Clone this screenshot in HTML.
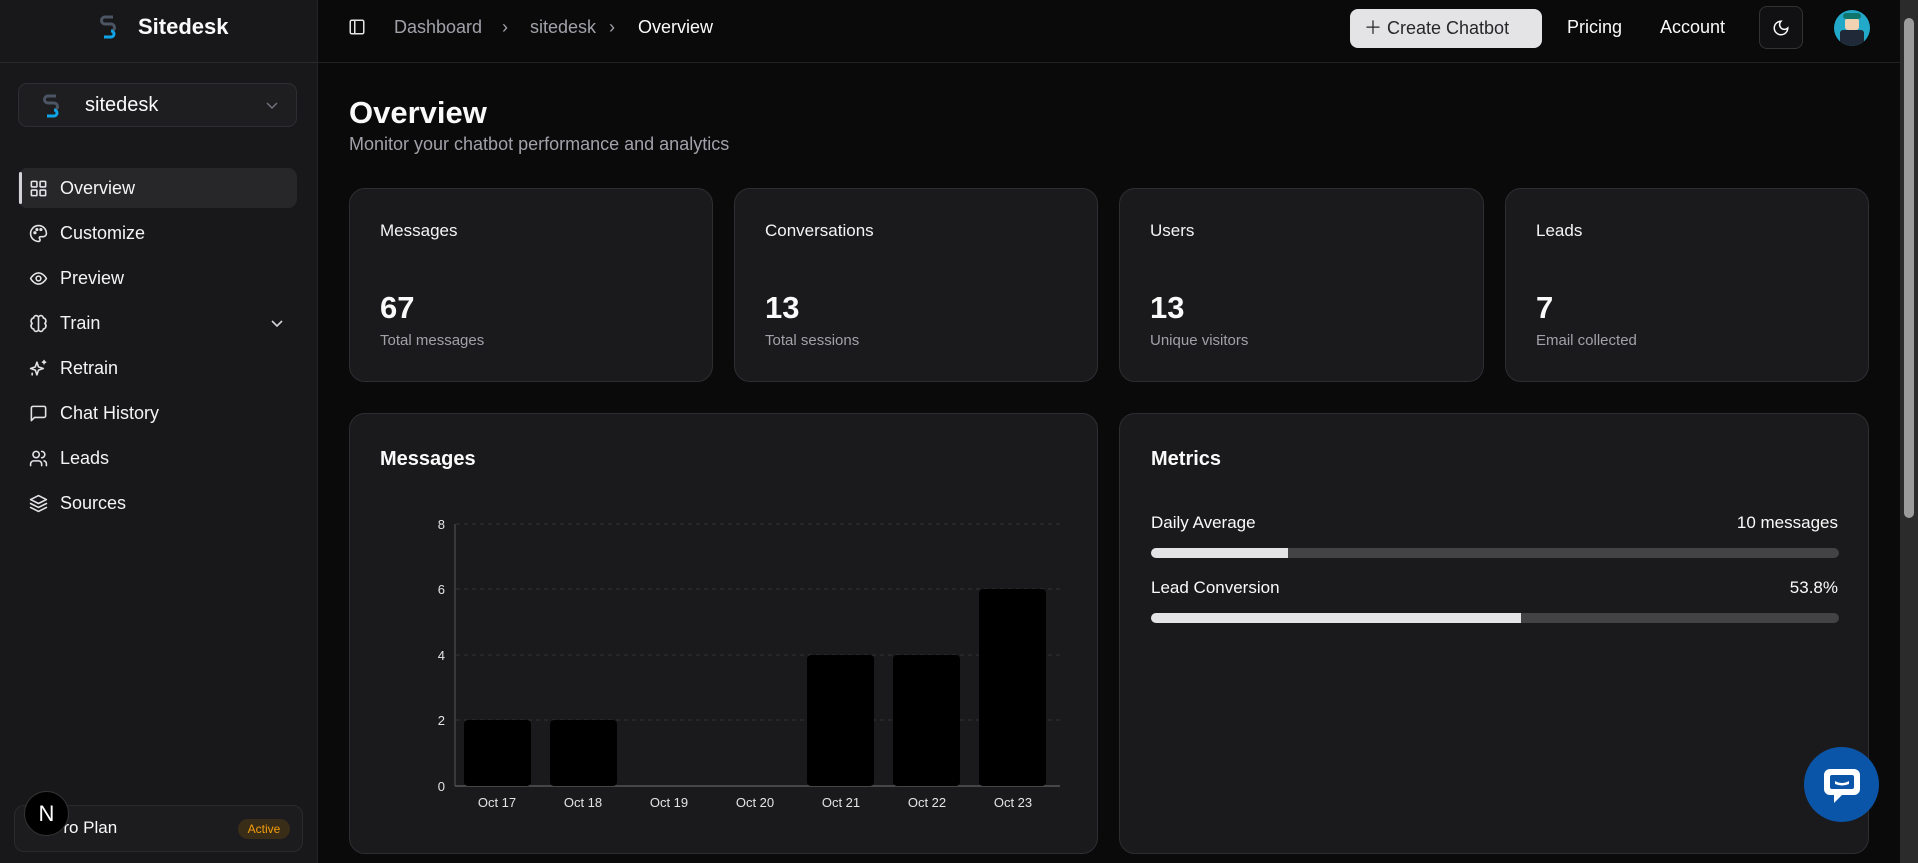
<!DOCTYPE html>
<html><head><meta charset="utf-8"><style>
*{box-sizing:border-box;margin:0;padding:0}
body{width:1918px;height:863px;overflow:hidden;background:#0a0a0b;font-family:"Liberation Sans",sans-serif;color:#fafafa;position:relative}
.abs{position:absolute}
.side{left:0;top:0;width:318px;height:863px;background:#18181b;border-right:1px solid #232326}
.nav{position:absolute;left:18px;width:279px;height:40px;display:flex;align-items:center;padding-left:11px;font-size:18px;color:#f4f4f5}
.nav svg{width:19px;height:19px;margin-right:12px;fill:none;stroke:#e4e4e7;stroke-width:2;stroke-linecap:round;stroke-linejoin:round}
.card{position:absolute;background:#1a1a1c;border:1px solid #2e2e32;border-radius:16px}
.lbl{position:absolute;left:30px;font-size:17px;color:#f4f4f5}
.num{position:absolute;left:30px;font-size:31px;font-weight:bold}
.sub{position:absolute;left:30px;font-size:15px;color:#a1a1aa}
.ax{font-size:13px;fill:#e4e4e7;font-family:"Liberation Sans",sans-serif}
.bc{position:absolute;top:17px;font-size:18px;color:#a1a1aa}
</style></head><body>
<div class="abs side"></div>
<div class="abs" style="left:0;top:62px;width:318px;border-top:1px solid #2a2a2d"></div>
<svg class="abs" style="left:100px;top:14px" width="16" height="26" viewBox="0 0 16 26"><path d="M13 3H5a3 3 0 0 0 0 7h6a3 3 0 0 1 0 7" fill="none" stroke="#4b5563" stroke-width="3"/><path d="M11 17a3 3 0 0 1 0 6H4" fill="none" stroke="#0ea5e9" stroke-width="3"/></svg>
<div class="abs" style="left:138px;top:14px;font-size:22px;font-weight:bold">Sitedesk</div>
<div class="abs" style="left:18px;top:83px;width:279px;height:44px;border:1px solid #2e2e32;border-radius:9px;background:#1e1e21"></div>
<svg class="abs" style="left:43px;top:93px" width="16" height="26" viewBox="0 0 16 26"><path d="M13 3H5a3 3 0 0 0 0 7h6a3 3 0 0 1 0 7" fill="none" stroke="#4b5563" stroke-width="3"/><path d="M11 17a3 3 0 0 1 0 6H4" fill="none" stroke="#0ea5e9" stroke-width="3"/></svg>
<div class="abs" style="left:85px;top:94px;font-size:20px">sitedesk</div>
<svg class="abs" style="left:266px;top:100px" width="12" height="10" viewBox="0 0 12 10"><path d="M1 3l5 5 5-5" fill="none" stroke="#71717a" stroke-width="1.5"/></svg>
<div class="abs" style="left:18px;top:168px;width:279px;height:40px;background:#27272a;border-radius:9px"></div>
<div class="abs" style="left:19px;top:172px;width:3px;height:32px;background:#d4d4d8;border-radius:2px"></div>
<div class="nav" style="top:168px"><svg viewBox="0 0 24 24"><rect x="3" y="3" width="7" height="7" rx="1"/><rect x="14" y="3" width="7" height="7" rx="1"/><rect x="3" y="14" width="7" height="7" rx="1"/><rect x="14" y="14" width="7" height="7" rx="1"/></svg>Overview</div>
<div class="nav" style="top:213px"><svg viewBox="0 0 24 24"><path d="M12 2a10 10 0 0 0 0 20c1.5 0 2-1 2-2s-1-1.5-1-2.5 1-1.5 2-1.5h3a4 4 0 0 0 4-4C22 6 17.5 2 12 2z"/><circle cx="7.5" cy="11" r="1"/><circle cx="10" cy="7" r="1"/><circle cx="15" cy="7" r="1"/></svg>Customize</div>
<div class="nav" style="top:258px"><svg viewBox="0 0 24 24"><path d="M2 12s4-7 10-7 10 7 10 7-4 7-10 7S2 12 2 12z"/><circle cx="12" cy="12" r="3"/></svg>Preview</div>
<div class="nav" style="top:303px"><svg viewBox="0 0 24 24"><path d="M12 5a3 3 0 0 0-6 0 4 4 0 0 0-2 7 4 4 0 0 0 2 7 3 3 0 0 0 6 0zM12 5a3 3 0 0 1 6 0 4 4 0 0 1 2 7 4 4 0 0 1-2 7 3 3 0 0 1-6 0zM12 5v14"/></svg>Train</div>
<svg class="abs" style="left:270px;top:318px" width="14" height="10" viewBox="0 0 14 10"><path d="M2 3l5 5 5-5" fill="none" stroke="#d4d4d8" stroke-width="1.6"/></svg>
<div class="nav" style="top:348px"><svg viewBox="0 0 24 24"><path d="M10 4l2 6 6 2-6 2-2 6-2-6-6-2 6-2z"/><path d="M19 2v4M17 4h4M4 18v2"/></svg>Retrain</div>
<div class="nav" style="top:393px"><svg viewBox="0 0 24 24"><path d="M21 15a2 2 0 0 1-2 2H7l-4 4V5a2 2 0 0 1 2-2h14a2 2 0 0 1 2 2z"/></svg>Chat History</div>
<div class="nav" style="top:438px"><svg viewBox="0 0 24 24"><circle cx="9" cy="7" r="4"/><path d="M2 21v-2a4 4 0 0 1 4-4h6a4 4 0 0 1 4 4v2M16 3a4 4 0 0 1 0 8M22 21v-2a4 4 0 0 0-3-4"/></svg>Leads</div>
<div class="nav" style="top:483px"><svg viewBox="0 0 24 24"><path d="M12 2l10 5-10 5L2 7z"/><path d="M2 12l10 5 10-5M2 17l10 5 10-5"/></svg>Sources</div>
<div class="abs" style="left:14px;top:805px;width:289px;height:47px;border:1px solid #2a2a2d;border-radius:10px;background:#1c1c1f"></div>
<div class="abs" style="left:52px;top:818px;font-size:17px">Pro Plan</div>
<div class="abs" style="left:238px;top:819px;width:52px;height:20px;border-radius:10px;background:#3a2d18;color:#f59e0b;font-size:12px;text-align:center;line-height:20px">Active</div>
<div class="abs" style="left:24px;top:791px;width:45px;height:45px;border-radius:50%;background:#000;border:1px solid #333;color:#fff;font-size:22px;text-align:center;line-height:43px">N</div>
<div class="abs" style="left:318px;top:62px;width:1582px;border-top:1px solid #222225"></div>
<svg class="abs" style="left:348px;top:18px" width="18" height="18" viewBox="0 0 24 24" fill="none" stroke="#e4e4e7" stroke-width="2"><rect x="3" y="3" width="18" height="18" rx="2"/><path d="M9 3v18"/></svg>
<div class="bc" style="left:394px">Dashboard</div>
<div class="bc" style="left:502px">›</div>
<div class="bc" style="left:530px">sitedesk</div>
<div class="bc" style="left:609px">›</div>
<div class="bc" style="left:638px;color:#fafafa">Overview</div>
<div class="abs" style="left:1350px;top:9px;width:192px;height:39px;border-radius:8px;background:#e4e4e7;color:#27272a;font-size:18px;line-height:39px;padding-left:14px">＋ Create Chatbot</div>
<div class="abs" style="left:1567px;top:17px;font-size:18px">Pricing</div>
<div class="abs" style="left:1660px;top:17px;font-size:18px">Account</div>
<div class="abs" style="left:1759px;top:6px;width:44px;height:43px;border:1px solid #333;border-radius:8px;background:#111113"></div>
<svg class="abs" style="left:1772px;top:19px" width="18" height="18" viewBox="0 0 24 24" fill="none" stroke="#fafafa" stroke-width="2"><path d="M12 3a6 6 0 0 0 9 9 9 9 0 1 1-9-9z"/></svg>
<div class="abs" style="left:1834px;top:10px;width:36px;height:36px;border-radius:50%;background:#22a8c9;overflow:hidden"><div style="position:absolute;left:6px;top:20px;width:24px;height:16px;background:#1f2937;border-radius:3px"></div><div style="position:absolute;left:11px;top:8px;width:14px;height:12px;background:#f1d3b3;border-radius:3px"></div><div style="position:absolute;left:9px;top:3px;width:18px;height:6px;background:#0f766e;border-radius:4px"></div></div>
<div class="abs" style="left:1900px;top:0;width:18px;height:863px;background:#2b2b2b"></div>
<div class="abs" style="left:1904px;top:18px;width:10px;height:500px;background:#9b9b9b;border-radius:5px"></div>
<div class="abs" style="left:349px;top:95px;font-size:31px;font-weight:bold">Overview</div>
<div class="abs" style="left:349px;top:134px;font-size:18px;color:#a1a1aa">Monitor your chatbot performance and analytics</div>
<div class="card" style="left:349px;top:188px;width:364px;height:194px"><div class="lbl" style="top:32px">Messages</div><div class="num" style="top:101px">67</div><div class="sub" style="top:143px">Total messages</div></div>
<div class="card" style="left:734px;top:188px;width:364px;height:194px"><div class="lbl" style="top:32px">Conversations</div><div class="num" style="top:101px">13</div><div class="sub" style="top:143px">Total sessions</div></div>
<div class="card" style="left:1119px;top:188px;width:365px;height:194px"><div class="lbl" style="top:32px">Users</div><div class="num" style="top:101px">13</div><div class="sub" style="top:143px">Unique visitors</div></div>
<div class="card" style="left:1505px;top:188px;width:364px;height:194px"><div class="lbl" style="top:32px">Leads</div><div class="num" style="top:101px">7</div><div class="sub" style="top:143px">Email collected</div></div>
<div class="card" style="left:349px;top:413px;width:749px;height:441px"><div style="position:absolute;left:30px;top:34px;font-size:20px;font-weight:bold">Messages</div></div>
<svg class="abs" style="left:400px;top:500px" width="680" height="330">
<g stroke="#333" stroke-dasharray="4 4"><line x1="56" y1="24" x2="660" y2="24"/><line x1="56" y1="89" x2="660" y2="89"/><line x1="56" y1="155" x2="660" y2="155"/><line x1="56" y1="220" x2="660" y2="220"/></g>
<line x1="55" y1="24" x2="55" y2="286" stroke="#555"/><line x1="55" y1="286" x2="660" y2="286" stroke="#555" stroke-width="1.5"/>
<g class="ax" text-anchor="end"><text x="45" y="29">8</text><text x="45" y="94">6</text><text x="45" y="160">4</text><text x="45" y="225">2</text><text x="45" y="291">0</text></g>
<g fill="#000"><rect x="64" y="220" width="67" height="66" rx="4"/><rect x="150" y="220" width="67" height="66" rx="4"/><rect x="407" y="155" width="67" height="131" rx="4"/><rect x="493" y="155" width="67" height="131" rx="4"/><rect x="579" y="89" width="67" height="197" rx="4"/></g>
<g class="ax" text-anchor="middle"><text x="97" y="307">Oct 17</text><text x="183" y="307">Oct 18</text><text x="269" y="307">Oct 19</text><text x="355" y="307">Oct 20</text><text x="441" y="307">Oct 21</text><text x="527" y="307">Oct 22</text><text x="613" y="307">Oct 23</text></g>
</svg>
<div class="card" style="left:1119px;top:413px;width:750px;height:441px">
<div style="position:absolute;left:31px;top:34px;font-size:20px;font-weight:bold">Metrics</div>
<div style="position:absolute;left:31px;top:99px;font-size:17px">Daily Average</div><div style="position:absolute;right:30px;top:99px;font-size:17px">10 messages</div>
<div style="position:absolute;left:31px;top:134px;width:688px;height:10px;border-radius:5px;background:#434346;overflow:hidden"><div style="width:137px;height:10px;background:#e4e4e7"></div></div>
<div style="position:absolute;left:31px;top:164px;font-size:17px">Lead Conversion</div><div style="position:absolute;right:30px;top:164px;font-size:17px">53.8%</div>
<div style="position:absolute;left:31px;top:199px;width:688px;height:10px;border-radius:5px;background:#434346;overflow:hidden"><div style="width:370px;height:10px;background:#e4e4e7"></div></div>
</div>
<div class="abs" style="left:1804px;top:747px;width:75px;height:75px;border-radius:50%;background:#0b55a8"></div>
<svg class="abs" style="left:1818px;top:761px" width="48" height="48" viewBox="0 0 48 48"><path d="M12 8h24a6 6 0 0 1 6 6v14a6 6 0 0 1-6 6H24l-8 8v-8h-4a6 6 0 0 1-6-6V14a6 6 0 0 1 6-6z" fill="#fff"/><rect x="12" y="14" width="24" height="14" rx="2" fill="#0b55a8"/><path d="M17 20q7 4 14 0v3q-7 3-14 0z" fill="#fff"/></svg>
</body></html>
